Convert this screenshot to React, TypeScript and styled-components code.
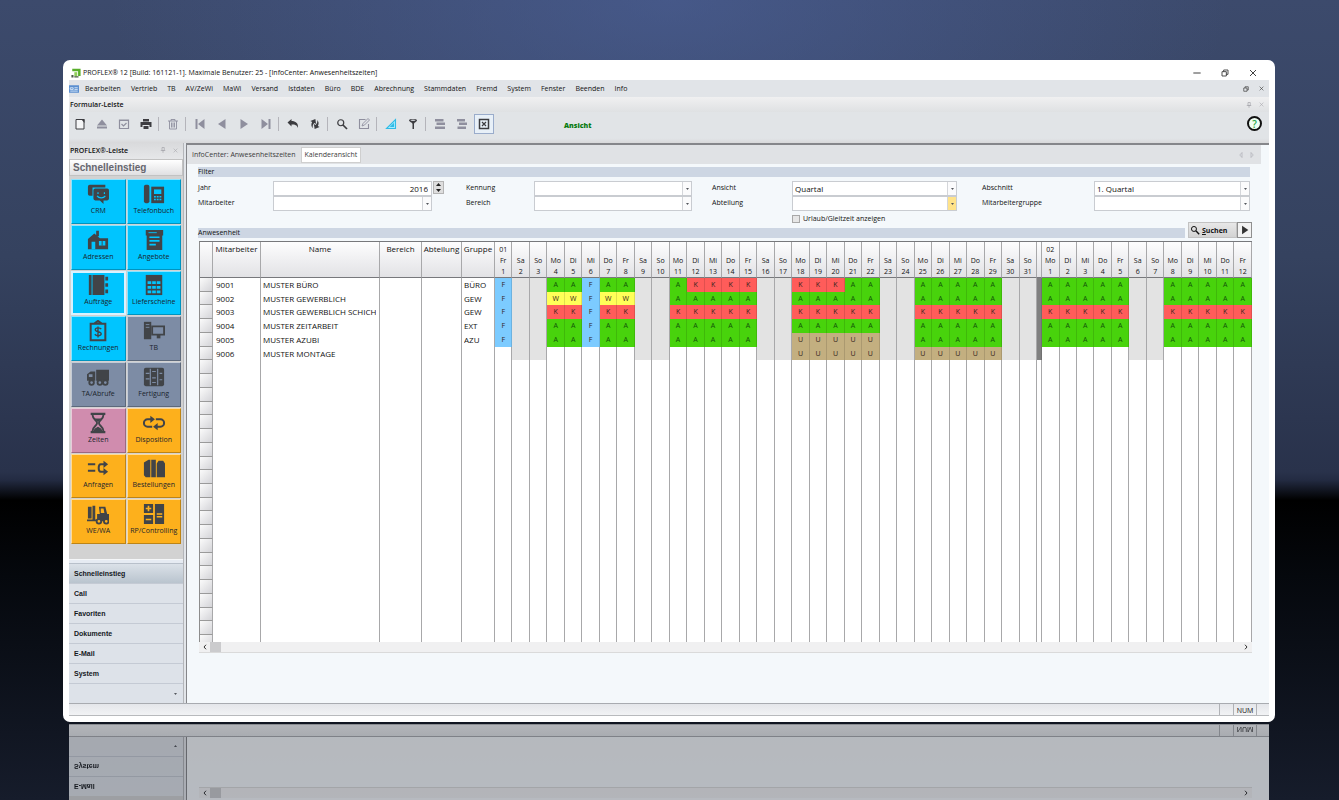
import React from "react";
import styled, { createGlobalStyle, css } from "styled-components";

const GlobalStyle = createGlobalStyle`
  * { box-sizing: border-box; }
  html, body { margin: 0; padding: 0; }
  body { font-family: "Open Sans", "Noto Sans", sans-serif; font-size: 7px; color: #111; background: #05070c; }
  button, input, select { font: inherit; color: inherit; margin: 0; padding: 0; border: 0; background: none; border-radius: 0; }
`;

/* ---------- page and window ---------- */

const Desktop = styled.div`
  height: 100vh;
  min-height: 640px;
  overflow: hidden;
  display: flex;
  flex-direction: column;
  padding: 60px 64px 0 63px;
  background:
    radial-gradient(ellipse 560px 260px at 50% 0, rgba(78, 100, 160, 0.55), rgba(78, 100, 160, 0) 100%),
    linear-gradient(#3c4a6c 0, #35425f 32%, #29324b 59%, #232b42 60%, #000 62.5%, #05080d 72%, #161c2b 100%);
`;

const Frame = styled.div`
  flex: none;
  height: calc(100vh - 138px);
  min-height: 560px;
  display: flex;
  flex-direction: column;
  padding: 0 6px 6px;
  background: #fff;
  border-radius: 7px;
`;

const TitleBar = styled.header`
  display: flex;
  align-items: center;
  flex: none;
  height: 20px;
  padding: 5px 12px 0 2px;
  gap: 2px;
`;

const Title = styled.h1`
  flex: 1;
  margin: 0;
  font-size: 7px;
  font-weight: 400;
`;

const WindowButtons = styled.div<{ $gap: number }>`
  display: flex;
  align-items: center;
  gap: ${(p) => p.$gap}px;
`;

const IconButton = styled.button<{ $size?: number }>`
  display: grid;
  place-items: center;
  width: ${(p) => p.$size ?? 8}px;
  height: ${(p) => p.$size ?? 8}px;
  color: #333;
`;

const MenuBar = styled.nav`
  display: flex;
  align-items: center;
  flex: none;
  height: 17px;
  gap: 10px;
  padding-right: 4px;
  background: #e1e4e8;
`;

const MenuLead = styled.span`
  display: flex;
  margin-right: -4px;
`;

const Spacer = styled.span`
  flex: 1;
`;

const PanelCaption = styled.div`
  display: flex;
  align-items: center;
  justify-content: space-between;
  flex: none;
  height: 15px;
  padding: 0 4px 0 1px;
  font-weight: 600;
  background: linear-gradient(#f0f0f1, #dfe1e3);
`;

const PinButtons = styled.div`
  display: flex;
  gap: 4px;
  button { color: #a8a8ae; }
`;

const Toolbar = styled.div`
  display: flex;
  align-items: center;
  flex: none;
  height: 31px;
  padding: 0 7px 8px 1px;
  background: linear-gradient(#e1e4e7 0, #e1e4e7 85%, #d8d8da 100%);
`;

const ToolButton = styled.button<{ $tone?: "dark" | "mute"; $on?: boolean }>`
  display: grid;
  place-items: center;
  width: 20px;
  height: 20px;
  margin-right: 2px;
  color: ${(p) => (p.$tone === "dark" ? "#3c3c40" : "#8f8f9e")};
  ${(p) => p.$on && css`background: #e8f0f8; box-shadow: inset 0 0 0 1px #9aaccb;`}
`;

const ToolDivider = styled.i`
  width: 1px;
  height: 14px;
  margin: 0 4px 0 0;
  background: #b4b4ba;
`;

const ModeLabel = styled.strong`
  margin-left: 68px;
  flex: 1;
  font-size: 7px;
  font-weight: 800;
  color: #087a10;
  padding-top: 3px;
`;

const HelpButton = styled.button`
  width: 15px;
  height: 15px;
  border: 2px solid #111;
  border-radius: 50%;
  background: #f0fff4;
  color: #2aa84a;
  font-size: 10px;
  font-weight: 600;
  line-height: 10px;
`;

const Workspace = styled.div`
  flex: 1;
  min-height: 0;
  display: flex;
  background: #e2e5e9;
`;

/* ---------- side bar ---------- */

const Sidebar = styled.aside`
  flex: none;
  width: 115px;
  display: flex;
  flex-direction: column;
  background: #d2d2d2;
  border-right: 1px solid #b4b6ba;
`;

const SideCaption = styled(PanelCaption)`
  height: 16px;
  padding-bottom: 2px;
  background: linear-gradient(#d9dadc, #e6e7e9);
`;

const SideHeading = styled.h2`
  flex: none;
  height: 17px;
  margin: 0;
  padding-left: 3px;
  border: 1px solid #c2c2c2;
  font: bold 10px/15px "Liberation Sans", Arial, sans-serif;
  color: #66666e;
  background: linear-gradient(#fff, #e0e0e2);
`;

const TileGrid = styled.div`
  flex: none;
  height: 365px;
  display: grid;
  grid-template-columns: 1fr 1fr;
  grid-template-rows: repeat(8, 1fr);
  gap: 1px;
  margin: 3px 2px 0;
`;

const tileTone = { blue: "#00c5ff", slate: "#7d8ca5", rose: "#d08cae", amber: "#fdb01c" };
type Tone = keyof typeof tileTone;

const Tile = styled.button<{ $tone: Tone; $current?: boolean }>`
  display: flex;
  flex-direction: column;
  align-items: center;
  justify-content: flex-end;
  gap: 1px;
  padding-bottom: 7px;
  overflow: hidden;
  white-space: nowrap;
  line-height: 10px;
  color: #1a242c;
  background: ${(p) => tileTone[p.$tone]};
  border: 1px solid;
  border-color: rgba(255, 255, 255, 0.55) rgba(0, 0, 0, 0.25) rgba(0, 0, 0, 0.25) rgba(255, 255, 255, 0.55);
  ${(p) => p.$current && css`border: 2px solid #d8f2ff; padding-bottom: 6px;`}
  svg { color: #414448; }
`;

const SideNavList = styled.ul`
  list-style: none;
  margin: auto 0 0;
  padding: 0;
  background: #dde2e9;
`;

const SideSplitter = styled.li`
  height: 5px;
  border: solid #f4f6f8;
  border-width: 1px 0;
  border-bottom-color: #b8c0ca;
  background: #e6ebf2;
`;

const SideNavItem = styled.li<{ $current?: boolean }>`
  height: 20px;
  border-bottom: 1px solid #c4cad4;
  background: ${(p) => (p.$current ? "linear-gradient(#dbe1e8, #b9c4ce)" : "transparent")};
  button {
    width: 100%;
    height: 100%;
    padding: 1px 0 0 5px;
    text-align: left;
    font: bold 7px/18px "Liberation Sans", Arial, sans-serif;
    color: #14181c;
  }
`;

const SideNavMore = styled.li`
  display: flex;
  justify-content: flex-end;
  align-items: center;
  height: 19px;
  padding-right: 5px;
`;

/* ---------- main panel ---------- */

const Main = styled.main`
  flex: 1;
  min-width: 0;
  display: flex;
  flex-direction: column;
  margin-left: 2px;
  padding-right: 8px;
  background: #f4f8fb;
  border: solid #85868a;
  border-width: 2px 0 0 1px;
`;

const TabBar = styled.div`
  display: flex;
  align-items: center;
  flex: none;
  height: 19px;
  padding-left: 5px;
  gap: 5px;
  background: #e0e2e5;
`;

const Tab = styled.button<{ $active?: boolean }>`
  height: 16px;
  color: #3c3c3c;
  ${(p) => p.$active && css`padding: 0 3px; background: #fff; border: 1px solid #cfcfcf;`}
`;

const TabArrows = styled.div`
  display: flex;
  gap: 3px;
  margin-left: auto;
  padding-right: 5px;
  button { color: #a9a9b0; }
`;

const Content = styled.div`
  flex: 1;
  min-height: 0;
  display: flex;
  flex-direction: column;
  margin: 3px 9px 50px 11px;
`;

const Band = styled.h3`
  flex: 1;
  margin: 0;
  height: 10px;
  font-size: 7px;
  font-weight: 500;
  line-height: 10px;
  background: #cdd6e3;
`;

const FilterSection = styled.section`
  flex: none;
  margin-right: 2px;
`;

const FilterForm = styled.form`
  display: grid;
  grid-template-columns: 75fr 193fr 68fr 178fr 80fr 190fr 112fr 156fr;
  grid-auto-rows: 15px;
  margin-top: 4px;
`;

const FieldLabel = styled.label`
  line-height: 13px;
`;

const FieldSlot = styled.div<{ $after: number }>`
  display: flex;
  min-width: 0;
  padding-right: ${(p) => p.$after}px;
`;

const SelectBox = styled.div`
  flex: 1;
  display: grid;
  grid-template-columns: 1fr 9px;
  height: 15px;
  background: #fff;
  border: 1px solid #c9ccd1;
  select {
    appearance: none;
    grid-area: 1 / 1 / 2 / 3;
    min-width: 0;
    padding-left: 2px;
    font-size: 8px;
    outline: 0;
  }
`;

const SelectArrow = styled.span<{ $hot?: boolean }>`
  grid-area: 1 / 2 / 2 / 3;
  display: grid;
  place-items: center;
  pointer-events: none;
  border-left: 1px solid #d4d6da;
  background: ${(p) => (p.$hot ? "#ffe38a" : "#fbfbfc")};
`;

const YearInput = styled.input`
  flex: 1;
  min-width: 0;
  height: 15px;
  padding-right: 3px;
  text-align: right;
  font-size: 8px;
  background: #fff;
  border: 1px solid #c9ccd1;
`;

const Stepper = styled.div`
  flex: none;
  display: grid;
  grid-template-rows: 1fr 1fr;
  width: 11px;
  height: 13px;
  margin-right: -12px;
  margin-left: 1px;
  border: 1px solid #b4b4b4;
  background: #dedede;
  button { display: grid; place-items: center; }
`;

const CheckRow = styled.label`
  grid-column: 6 / 8;
  display: flex;
  align-items: center;
  gap: 3px;
  input {
    appearance: none;
    width: 8px;
    height: 8px;
    border: 1px solid #a8a8a8;
    background: #e6e6e6;
  }
`;

const AttendanceHead = styled.div`
  display: flex;
  align-items: flex-end;
  flex: none;
  height: 17px;
  margin-top: -5px;
  margin-bottom: 3px;
`;

const SearchButton = styled.button`
  display: flex;
  align-items: center;
  gap: 2px;
  width: 49px;
  height: 16px;
  margin-left: 3px;
  padding-left: 1px;
  font-weight: 700;
  background: linear-gradient(#e8e8e8, #d3d3d3);
  border: 1px solid #c2c2c2;
`;

const RunButton = styled.button`
  display: grid;
  place-items: center;
  width: 15px;
  height: 16px;
  border: 1px solid #8f8f8f;
  background: #f2f2f2;
  color: #333;
`;

const GridViewport = styled.div`
  flex: 1;
  min-height: 0;
  overflow: hidden;
  margin-left: 1px;
  border-top: 1px solid #77787c;
  border-left: 1px solid #8d8d8d;
  background: #fff;
`;

const Sheet = styled.table`
  width: 100%;
  height: 407px;
  table-layout: fixed;
  border-collapse: separate;
  border-spacing: 0;
  font-size: 8px;
  line-height: 10px;
  th, td { padding: 0; overflow: hidden; white-space: nowrap; border-right: 1px solid #a8a8aa; }
  td { height: 13px; }
`;

const HeadCell = styled.th`
  height: 36px;
  font-weight: 400;
  vertical-align: top;
  padding-top: 2px !important;
  border-bottom: 1px solid #77787c;
  background: linear-gradient(#fdfdfe, #e2e2e5);
`;

const HeadLine = styled.span`
  display: block;
  height: 11px;
  line-height: 11px;
  font-size: 7px;
`;

const HandleCell = styled.td`
  border-bottom: 1px solid #9a9a9a;
  background: linear-gradient(135deg, #fbfbfb, #d4d4d8);
`;

const TextCell = styled.td<{ $pad?: number }>`
  > span {
    display: block;
    margin-left: ${(p) => p.$pad ?? 2}px;
    margin-right: 3px;
    overflow: hidden;
  }
`;

const codeTone: Record<string, string> = {
  A: "#48d30c",
  K: "#ff5c5a",
  F: "#7ccbff",
  W: "#ffff58",
  U: "#c3af80",
  ".": "#e3e3e3",
  "|": "#808080",
};

const CodeCell = styled.td<{ $code: string }>`
  text-align: center;
  font-size: 7px;
  color: ${(p) => (p.$code === "A" ? "#12520a" : "#33231c")};
  background: ${(p) => codeTone[p.$code] ?? "transparent"};
  ${(p) => "AKFWU|".includes(p.$code) && css`border-right-color: rgba(0, 0, 0, 0.12) !important;`}
`;

const ScrollTrack = styled.div`
  flex: none;
  display: flex;
  align-items: center;
  height: 11px;
  margin-left: 1px;
  padding: 0 2px;
  background: #f0f0f1;
  border-bottom: 1px solid #dadada;
`;

const ScrollThumb = styled.span`
  width: 11px;
  height: 10px;
  margin-left: 1px;
  background: #cbcbcd;
`;

const StatusBar = styled.footer`
  flex: none;
  display: flex;
  justify-content: flex-end;
  height: 13px;
  border-top: 1px solid #a8abb0;
  border-bottom: 1px solid #b8babd;
  background: linear-gradient(#e4e6ea, #f2f3f5);
`;

const StatusCell = styled.span<{ $w: number }>`
  width: ${(p) => p.$w}px;
  border-left: 1px solid #b0b2b6;
  text-align: center;
  line-height: 13px;
  font-size: 7px;
`;

/* ---------- mirror image under the window ---------- */

const Mirror = styled.div`
  flex: 1;
  min-height: 0;
  overflow: hidden;
  display: flex;
  flex-direction: column;
  justify-content: flex-end;
  margin: 2px 6px 0;
  transform: scaleY(-1);
  opacity: 0.72;
  filter: saturate(0.8);
  pointer-events: none;
`;

const MirrorBody = styled.div`
  display: flex;
  flex: none;
  height: 63px;
  background: #e2e5e9;
`;

const MirrorMain = styled(Main)`
  border-top: 0;
`;

const MirrorScroll = styled.div`
  margin: 2px 9px 0 11px;
`;

/* ---------- icons ---------- */

const Svg = ({ size = 12, box = 24, children }: { size?: number; box?: number; children: React.ReactNode }) => (
  <svg width={size} height={size} viewBox={`0 0 ${box} ${box}`} fill="none" stroke="none" aria-hidden="true">
    {children}
  </svg>
);

const c = "currentColor";

const toolIcons: Record<string, React.ReactNode> = {
  new: <><path d="M4 3h16v19H4z" stroke={c} strokeWidth="2" fill="#f4f5f6" /><path d="M14 2h7v8z" fill={c} /></>,
  eject: <path d="M12 3 22 15H2zM2 17h20v4H2z" fill={c} />,
  check: <><path d="M3 4h18v17H3zM3 5h18" stroke={c} strokeWidth="2.4" /><path d="m7 12 4 4 6-6" stroke={c} strokeWidth="2.4" /></>,
  print: <path d="M6 2h12v5H6zM1 8h22v10h-4v-4H5v4H1zM7 16h10v6H7z" fill={c} />,
  trash: <path d="M2 6h20M8 6V3h8v3M5 6v16h14V6M9 9v10M12 9v10M15 9v10" stroke={c} strokeWidth="1.8" />,
  first: <path d="M3 2h4v20H3zM21 2v20L8 12z" fill={c} />,
  prev: <path d="M19 2v20L4 12z" fill={c} />,
  next: <path d="M5 2v20l15-10z" fill={c} />,
  last: <path d="M17 2h4v20h-4zM3 2v20l13-10z" fill={c} />,
  undo: <path d="M1 9 9 2v4c8 0 14 4 13 14-2-6-6-7-13-7v4z" fill={c} />,
  sync: <g transform="rotate(28 12 12)"><path d="M8 3 1 11h4c0 6 3 9 7 10-3-3-3-6-2-10h4zM16 21l7-8h-4c0-6-3-9-7-10 3 3 3 6 2 10h-4z" fill={c} /></g>,
  search: <><circle cx="9.500" cy="9.500" r="6" stroke={c} strokeWidth="2.400" /><path d="m14 14 8 8" stroke={c} strokeWidth="3.400" /></>,
  edit: <><path d="M15 3H3v18h18v-9" stroke={c} strokeWidth="2.200" /><path d="M8 16 10 11 20 1l3 3-10 10z" stroke={c} strokeWidth="1.800" /></>,
  ruler: <path d="M3 21h18V3zM12 17h5v-5z" stroke="#2fbbe6" strokeWidth="2.200" fill="#a8ebff" fillRule="evenodd" />,
  filter: <><path d="M4 4c0-3 16-3 16 0 0 4-6 5-6 8v10h-3V12c0-3-7-4-7-8z" fill={c} /><ellipse cx="12" cy="4.500" rx="5" ry="1.500" fill="#cfd2d6" /></>,
  linesA: <path d="M2 2h17v5H2zM5 9h17v5H5zM2 17h20v5H2z" fill={c} />,
  linesB: <path d="M2 2h16v5H2zM6 9h16v5H6zM3 17h17v5H3z" fill={c} />,
  boxX: <><path d="M3 3h18v18H3z" stroke={c} strokeWidth="3" /><path d="m8 8 8 8M16 8l-8 8" stroke={c} strokeWidth="2.400" /></>,
};

const tileIcons: Record<string, React.ReactNode> = {
  crm: <><path d="M3 2h17v3H6v9H3a2 2 0 0 1-2-2V4a2 2 0 0 1 2-2z" fill={c} /><path d="M9 6h13a2 2 0 0 1 2 2v9a2 2 0 0 1-2 2h-4v4l-4-4H9a2 2 0 0 1-2-2V8a2 2 0 0 1 2-2z" fill={c} /><path d="M12 10v2M19 10v2M11 14c2 3 7 3 9 0" stroke="#00c5ff" strokeWidth="1.300" /></>,
  phone: <><rect x="1" y="2" width="6" height="20" rx="2" fill={c} /><path d="M9 4h14v18H9z" fill={c} /><path d="M12 7h8v5h-8z" fill="#00c5ff" /><path d="M12 15h2M15 15h2M18 15h2M12 18h2M15 18h2M18 18h2" stroke="#00c5ff" strokeWidth="1.400" /></>,
  house: <><path d="M1 11 8 5l6 5h9v12H1zM10 2h3v6h-3z" fill={c} /><path d="M5 14h4v8H5zM13 13h7v5h-7z" fill="#00c5ff" /><path d="M16.500 13v5" stroke={c} /></>,
  offer: <><path d="M3 1h19v6h-1v16H4V7H3z" fill={c} /><path d="M7 9h11M7 13h11M7 17h7" stroke="#00c5ff" strokeWidth="1.800" /><path d="M6 4h9" stroke="#00c5ff" /></>,
  binder: <path d="M2 1h3v22H2zM6 1h13v22H6zM20 3h3v4h-3zM20 10h3v4h-3zM20 17h3v4h-3z" fill={c} />,
  sheet: <><path d="M3 1h18v22H3z" fill={c} /><path d="M5 8h4v3H5zM10 8h4v3h-4zM15 8h4v3h-4zM5 13h4v3H5zM10 13h4v3h-4zM15 13h4v3h-4zM5 18h4v3H5zM10 18h4v3h-4zM15 18h4v3h-4z" fill="#00c5ff" /></>,
  invoice: <><path d="M4 4h16v18H4zM8 4l4-3 4 3" stroke={c} strokeWidth="2.200" /><path d="M15.500 10c-1-2-6.500-2-6.500.5s6.500 2 6.500 4.500-5 3-7 .5M12 7v12" stroke={c} strokeWidth="1.500" /></>,
  computer: <><path d="M1 2h8v19H1z" fill={c} /><path d="M3 5h4M3 8h4" stroke="#7d8ca5" /><path d="M10 7h13v9H10z" stroke={c} strokeWidth="2" /><path d="M15 16h4v4h-4z" fill={c} /></>,
  truck: <><path d="M10 4h14v12H10zM0 15V9l4-3h5v10H0z" fill={c} /><g fill="#7d8ca5" stroke={c} strokeWidth="2"><circle cx="5" cy="18" r="2.500" /><circle cx="14" cy="18" r="2.500" /><circle cx="20" cy="18" r="2.500" /></g><path d="M2 9h4v3H2z" fill="#7d8ca5" /></>,
  abacus: <><rect x="1" y="2" width="22" height="20" rx="2" fill={c} /><path d="M8 3v18M16 3v18M3 8h4M3 14h4M10 6h4M10 13h4M10 18h4M18 8h3M18 15h3" stroke="#7d8ca5" strokeWidth="1.300" /></>,
  hourglass: <><path d="M4 2h16M4 22h16" stroke={c} strokeWidth="2.600" /><path d="M6 3c0 5 5 6 5 9s-5 4-5 9M18 3c0 5-5 6-5 9s5 4 5 9" stroke={c} strokeWidth="2" /><path d="M8 7h8l-4 4zM7 21c1-4 4-4 5-5 1 1 4 1 5 5z" fill={c} /></>,
  loop: <><path d="M9 8H5a4 4 0 0 0 0 8h5M15 16h4a4 4 0 0 0 0-8h-5" stroke={c} strokeWidth="2.200" /><path d="m8 4 5 4-5 4zM16 12l-5 4 5 4z" fill={c} /></>,
  shuffle: <><path d="M1 8h8M1 15h8M20 8h-5c-3 0-3 8 0 8h5" stroke={c} strokeWidth="2.200" /><path d="m18 4 5 4-5 4zM18 12l5 4-5 4z" fill={c} /></>,
  boxes: <path d="M1 6l5-3h2v19H3l-2-2zM9 3h5v19H9zM15 7l2-3h5l2 3v15h-9z" fill={c} />,
  forklift: <><path d="M1 4h4v13H1zM6 3h3v15h13v2H0v-2h6zM13 4h7l2 8h2v6H11v-6h3z" fill={c} /><path d="M15 6h3l1 5h-4z" fill="#fdb01c" /><circle cx="13" cy="20" r="2.500" fill="#fdb01c" stroke={c} strokeWidth="2" /><circle cx="21" cy="20" r="2.500" fill="#fdb01c" stroke={c} strokeWidth="2" /></>,
  calc: <><path d="M1 1h10v10H1zM13 1h10v22H13zM1 13h10v10H1z" fill={c} /><path d="M3 6h6M6 3v6M3 18h6M15 12h6M15 15h6" stroke="#fdb01c" strokeWidth="1.800" /></>,
};

const Caret = () => (
  <svg width="5" height="3" viewBox="0 0 5 3" aria-hidden="true"><path d="M1 1h3L2.500 3z" fill="#55585e" /></svg>
);
const Restore = ({ size }: { size: number }) => (
  <Svg size={size}><path d="M3 8h13v13H3zM8 8V3h13v13h-5" stroke={c} strokeWidth="2.600" /></Svg>
);
const Cross = ({ size }: { size: number }) => (
  <Svg size={size}><path d="m3 3 18 18M21 3 3 21" stroke={c} strokeWidth="2.800" /></Svg>
);
const Pins = () => (
  <PinButtons>
    <IconButton aria-label="Anheften"><Svg size={6}><path d="M8 2h9v12H8zM3 14h18M12 14v9" stroke={c} strokeWidth="3" /></Svg></IconButton>
    <IconButton aria-label="Leiste ausblenden"><Cross size={5} /></IconButton>
  </PinButtons>
);

/* ---------- data ---------- */

const menus = ["Bearbeiten", "Vertrieb", "TB", "AV/ZeWi", "MaWi", "Versand", "Istdaten", "Büro", "BDE", "Abrechnung", "Stammdaten", "Fremd", "System", "Fenster", "Beenden", "Info"];

type Tool = [string, string, ("dark" | "mute")?, boolean?] | null;
const tools: Tool[] = [
  ["new", "Neu", "dark"], ["eject", "Auswerfen"], ["check", "Speichern"], ["print", "Drucken", "dark"], null,
  ["trash", "Löschen"], null,
  ["first", "Erster"], ["prev", "Zurück"], ["next", "Weiter"], ["last", "Letzter"], null,
  ["undo", "Rückgängig", "dark"], ["sync", "Aktualisieren", "dark"], null,
  ["search", "Suchen", "dark"], ["edit", "Ändern"], null,
  ["ruler", "Lineal"], ["filter", "Filtern", "dark"], null,
  ["linesA", "Liste links"], ["linesB", "Liste rechts"], ["boxX", "Ansicht schließen", "dark", true],
];

const tiles: [string, string, Tone, boolean?][] = [
  ["CRM", "crm", "blue"], ["Telefonbuch", "phone", "blue"],
  ["Adressen", "house", "blue"], ["Angebote", "offer", "blue"],
  ["Aufträge", "binder", "blue", true], ["Lieferscheine", "sheet", "blue"],
  ["Rechnungen", "invoice", "blue"], ["TB", "computer", "slate"],
  ["TA/Abrufe", "truck", "slate"], ["Fertigung", "abacus", "slate"],
  ["Zeiten", "hourglass", "rose"], ["Disposition", "loop", "amber"],
  ["Anfragen", "shuffle", "amber"], ["Bestellungen", "boxes", "amber"],
  ["WE/WA", "forklift", "amber"], ["RP/Controlling", "calc", "amber"],
];

const sections = ["Schnelleinstieg", "Call", "Favoriten", "Dokumente", "E-Mail", "System"];

const weekdays = ["Mo", "Di", "Mi", "Do", "Fr", "Sa", "So"];
const january = Array.from({ length: 31 }, (_, i) => ({ month: i === 0 ? "01" : "", name: weekdays[(i + 4) % 7], day: i + 1 }));
const february = Array.from({ length: 12 }, (_, i) => ({ month: i === 0 ? "02" : "", name: weekdays[i % 7], day: i + 1 }));

/* One character per day; "." is a weekend, "|" the month divider, "_" an empty day. */
const staff = [
  { id: "9001", name: "MUSTER BÜRO", group: "BÜRO", codes: "F..AAFAA..AKKKK..KKKAA..AAAAA..|AAAAA..AAAAA" },
  { id: "9002", name: "MUSTER GEWERBLICH", group: "GEW", codes: "F..WWFWW..AAAAA..AAAAA..AAAAA..|AAAAA..AAAAA" },
  { id: "9003", name: "MUSTER GEWERBLICH SCHICHT", group: "GEW", codes: "F..KKFKK..KKKKK..KKKKK..KKKKK..|KKKKK..KKKKK" },
  { id: "9004", name: "MUSTER ZEITARBEIT", group: "EXT", codes: "F..AAFAA..AAAAA..AAAAA..AAAAA..|AAAAA..AAAAA" },
  { id: "9005", name: "MUSTER AZUBI", group: "AZU", codes: "F..AAFAA..AAAAA..UUUUU..AAAAA..|AAAAA..AAAAA" },
  { id: "9006", name: "MUSTER MONTAGE", group: "", codes: "_.._____.._____..UUUUU..UUUUU..|_____.._____" },
];
const emptyRows = 21;
const emptyCodes = "_".repeat(44);

/* ---------- parts ---------- */

const Field = ({ id, label, value = "", after = 0, hot }: { id: string; label: string; value?: string; after?: number; hot?: boolean }) => (
  <>
    <FieldLabel htmlFor={id}>{label}</FieldLabel>
    <FieldSlot $after={after}>
      <SelectBox>
        <select id={id} defaultValue={value}><option>{value}</option></select>
        <SelectArrow $hot={hot}><Caret /></SelectArrow>
      </SelectBox>
    </FieldSlot>
  </>
);

const SideNav = ({ items, splitter }: { items: string[]; splitter?: boolean }) => (
  <SideNavList>
    {splitter && <SideSplitter />}
    {items.map((s) => (
      <SideNavItem key={s} $current={s === "Schnelleinstieg"}><button tabIndex={splitter ? 0 : -1}>{s}</button></SideNavItem>
    ))}
    <SideNavMore><Caret /></SideNavMore>
  </SideNavList>
);

const Scroll = () => (
  <ScrollTrack>
    <IconButton aria-label="Nach links"><Svg size={6}><path d="M16 3 8 12l8 9" stroke={c} strokeWidth="4" /></Svg></IconButton>
    <ScrollThumb />
    <Spacer />
    <IconButton aria-label="Nach rechts"><Svg size={6}><path d="m8 3 8 9-8 9" stroke={c} strokeWidth="4" /></Svg></IconButton>
  </ScrollTrack>
);

const Status = () => (
  <StatusBar>
    <StatusCell $w={14} />
    <StatusCell $w={23}>NUM</StatusCell>
    <StatusCell $w={13} />
  </StatusBar>
);

const DayHead = ({ month, name, day }: { month: string; name: string; day: number }) => (
  <HeadCell scope="col"><HeadLine>{month}</HeadLine><HeadLine>{name}</HeadLine><HeadLine>{day}</HeadLine></HeadCell>
);

const Attendance = () => (
  <GridViewport>
    <Sheet>
      <colgroup>
        {[13, 48, 119, 42, 40, 33].map((w) => <col key={w} style={{ width: w }} />)}
        {january.map((d) => <col key={d.day} />)}
        <col style={{ width: 5 }} />
        {february.map((d) => <col key={d.day} />)}
      </colgroup>
      <thead>
        <tr>
          <HeadCell />
          {["Mitarbeiter", "Name", "Bereich", "Abteilung", "Gruppe"].map((h) => <HeadCell key={h} scope="col">{h}</HeadCell>)}
          {january.map((d) => <DayHead key={d.day} {...d} />)}
          <HeadCell />
          {february.map((d) => <DayHead key={d.day} {...d} />)}
        </tr>
      </thead>
      <tbody>
        {staff.map((p) => (
          <tr key={p.id}>
            <HandleCell />
            <TextCell $pad={3}><span>{p.id}</span></TextCell>
            <TextCell><span>{p.name}</span></TextCell>
            <TextCell />
            <TextCell />
            <TextCell><span>{p.group}</span></TextCell>
            {[...p.codes].map((k, i) => <CodeCell key={i} $code={k}>{/[A-Z]/.test(k) ? k : null}</CodeCell>)}
          </tr>
        ))}
        {Array.from({ length: emptyRows }, (_, r) => (
          <tr key={r}>
            <HandleCell />
            {[0, 1, 2, 3, 4].map((i) => <TextCell key={i} />)}
            {[...emptyCodes].map((k, i) => <CodeCell key={i} $code={k} />)}
          </tr>
        ))}
      </tbody>
    </Sheet>
  </GridViewport>
);

export default function App() {
  return (
    <>
      <GlobalStyle />
      <Desktop>
        <Frame>
          <TitleBar>
            <Svg size={10}><path d="M3 2h20v17h-6V8H3z" fill="#5aae2c" /><path d="M8 10h7v10H8z" fill="#8fce5a" /><path d="M1 17h5v6H1zM8 20h10v3H8z" fill="#4b5a48" /></Svg>
            <Title>PROFLEX® 12 [Build: 161121-1]. Maximale Benutzer: 25 - [InfoCenter: Anwesenheitszeiten]</Title>
            <WindowButtons $gap={20}>
              <IconButton aria-label="Minimieren"><Svg size={8}><path d="M1 12h22" stroke={c} strokeWidth="2.800" /></Svg></IconButton>
              <IconButton aria-label="Wiederherstellen"><Restore size={8} /></IconButton>
              <IconButton aria-label="Schließen"><Cross size={8} /></IconButton>
            </WindowButtons>
          </TitleBar>
          <MenuBar>
            <MenuLead><Svg size={10}><path d="M0 3h24v18H0z" fill="#5b8fd0" /><path d="M3 9h7v4H3zM13 9h8M13 13h8M3 17h18" stroke="#e6f0fb" strokeWidth="2" /></Svg></MenuLead>
            {menus.map((m) => <button key={m}>{m}</button>)}
            <Spacer />
            <WindowButtons $gap={7}>
              <IconButton aria-label="Fenster wiederherstellen"><Restore size={6} /></IconButton>
              <IconButton aria-label="Fenster schließen"><Cross size={5} /></IconButton>
            </WindowButtons>
          </MenuBar>
          <PanelCaption>Formular-Leiste<Pins /></PanelCaption>
          <Toolbar>
            {tools.map((t, i) => t
              ? <ToolButton key={t[0]} aria-label={t[1]} $tone={t[2]} $on={t[3]}><Svg size={12}>{toolIcons[t[0]]}</Svg></ToolButton>
              : <ToolDivider key={i} />)}
            <ModeLabel>Ansicht</ModeLabel>
            <HelpButton aria-label="Hilfe">?</HelpButton>
          </Toolbar>
          <Workspace>
            <Sidebar>
              <SideCaption>PROFLEX®-Leiste<Pins /></SideCaption>
              <SideHeading>Schnelleinstieg</SideHeading>
              <TileGrid>
                {tiles.map(([label, icon, tone, current]) => (
                  <Tile key={label} $tone={tone} $current={current}><Svg size={22}>{tileIcons[icon]}</Svg>{label}</Tile>
                ))}
              </TileGrid>
              <SideNav items={sections} splitter />
            </Sidebar>
            <Main>
              <TabBar>
                <Tab>InfoCenter: Anwesenheitszeiten</Tab>
                <Tab $active>Kalenderansicht</Tab>
                <TabArrows>
                  <IconButton aria-label="Vorheriger Tab"><Svg size={6}><path d="M16 2v20L7 12z" stroke={c} strokeWidth="2.500" /></Svg></IconButton>
                  <IconButton aria-label="Nächster Tab"><Svg size={6}><path d="M8 2v20l9-10z" stroke={c} strokeWidth="2.500" /></Svg></IconButton>
                </TabArrows>
              </TabBar>
              <Content>
                <FilterSection>
                  <Band>Filter</Band>
                  <FilterForm>
                    <FieldLabel htmlFor="jahr">Jahr</FieldLabel>
                    <FieldSlot $after={34}>
                      <YearInput id="jahr" defaultValue="2016" inputMode="numeric" />
                      <Stepper>
                        <button type="button" aria-label="Jahr vor"><svg width="5" height="3" viewBox="0 0 5 3"><path d="M0 3h5L2.500 0z" fill="#222" /></svg></button>
                        <button type="button" aria-label="Jahr zurück"><svg width="5" height="3" viewBox="0 0 5 3"><path d="M0 0h5L2.500 3z" fill="#222" /></svg></button>
                      </Stepper>
                    </FieldSlot>
                    <Field id="kennung" label="Kennung" after={20} />
                    <Field id="ansicht" label="Ansicht" value="Quartal" after={25} />
                    <Field id="abschnitt" label="Abschnitt" value="1. Quartal" />
                    <Field id="mitarbeiter" label="Mitarbeiter" after={34} />
                    <Field id="bereich" label="Bereich" after={20} />
                    <Field id="abteilung" label="Abteilung" after={25} hot />
                    <Field id="gruppe" label="Mitarbeitergruppe" />
                    <CheckRow><input type="checkbox" />Urlaub/Gleitzeit anzeigen</CheckRow>
                  </FilterForm>
                </FilterSection>
                <AttendanceHead>
                  <Band>Anwesenheit</Band>
                  <SearchButton><Svg size={10}>{toolIcons.search}</Svg><span><u>S</u>uchen</span></SearchButton>
                  <RunButton aria-label="Ausführen"><Svg size={10}>{toolIcons.next}</Svg></RunButton>
                </AttendanceHead>
                <Attendance />
                <Scroll />
              </Content>
            </Main>
          </Workspace>
          <Status />
        </Frame>
        <Mirror aria-hidden="true" inert>
          <MirrorBody>
            <Sidebar><SideNav items={["E-Mail", "System"]} /></Sidebar>
            <MirrorMain><MirrorScroll><Scroll /></MirrorScroll></MirrorMain>
          </MirrorBody>
          <Status />
        </Mirror>
      </Desktop>
    </>
  );
}
